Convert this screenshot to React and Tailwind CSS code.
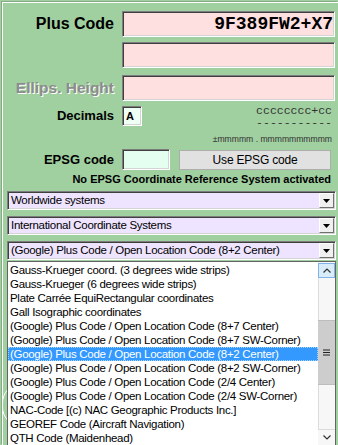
import React from "react";

const listItems = [
  "Gauss-Krueger coord. (3 degrees wide strips)",
  "Gauss-Krueger (6 degrees wide strips)",
  "Plate Carrée EquiRectangular coordinates",
  "Gall Isographic coordinates",
  "(Google) Plus Code / Open Location Code (8+7 Center)",
  "(Google) Plus Code / Open Location Code (8+7 SW-Corner)",
  "(Google) Plus Code / Open Location Code (8+2 Center)",
  "(Google) Plus Code / Open Location Code (8+2 SW-Corner)",
  "(Google) Plus Code / Open Location Code (2/4 Center)",
  "(Google) Plus Code / Open Location Code (2/4 SW-Corner)",
  "NAC-Code [(c) NAC Geographic Products Inc.]",
  "GEOREF Code (Aircraft Navigation)",
  "QTH Code (Maidenhead)",
];
const SELECTED = 6;

// classic sunken 3D edit box
const sunken =
  "border border-t-[#7d7d7d] border-l-[#7d7d7d] border-b-white border-r-white shadow-[inset_1px_1px_0_#3f3f3f,inset_-1px_-1px_0_#d4d4d4]";

const ComboBox = ({ text }) => (
  <div className={`flex items-center h-[19px] bg-[#eee4ff] ${sunken}`}>
    <div className="flex-1 pl-[3px] text-[11.5px] tracking-[-0.3px] leading-[15px] whitespace-nowrap overflow-hidden">
      {text}
    </div>
    <div className="w-[15px] h-[15px] mr-[1px] flex items-center justify-center bg-[#f0f0f0] border border-t-white border-l-white border-b-[#707070] border-r-[#707070]">
      <svg width="7" height="4" viewBox="0 0 7 4">
        <path d="M0 0h7L3.5 4z" fill="#000" />
      </svg>
    </div>
  </div>
);

export default function App() {
  return (
    <div className="relative w-[338px] h-[445px] overflow-hidden bg-[#a0cfa0] pt-[2px] pl-[2px] font-['Liberation_Sans',Arial,sans-serif] text-black">
      {/* edge of a round control peeking out behind the open list */}
      <div className="absolute left-[2px] top-[383px] w-[40px] h-[44px] rounded-full border border-white" />

      <div className="relative h-full border-t border-l border-white shadow-[-1px_-1px_0_#86a886] pl-[4px] pr-[2px]">
        {/* Plus Code */}
        <div className="flex items-center mt-[8px]">
          <div className="w-[107px] text-right text-[16px] font-bold leading-[20px]">Plus Code</div>
          <div className={`ml-[8px] w-[213px] h-[26px] bg-[#ffe0e0] flex items-center justify-end pr-[1px] ${sunken}`}>
            <span className="font-['Liberation_Mono',monospace] font-bold text-[18px] leading-[22px]">9F389FW2+X7</span>
          </div>
        </div>

        <div className="flex items-center mt-[5px]">
          <div className="w-[107px]" />
          <div className={`ml-[8px] w-[213px] h-[26px] bg-[#ffe0e0] ${sunken}`} />
        </div>

        <div className="flex items-center mt-[7px]">
          <div className="w-[107px] text-right text-[15.5px] font-bold leading-[20px] text-[#8c8c8c] [text-shadow:1px_1px_0_#ffffff]">
            Ellips. Height
          </div>
          <div className={`ml-[8px] w-[213px] h-[26px] bg-[#ffe0e0] ${sunken}`} />
        </div>

        {/* Decimals + format hints */}
        <div className="flex items-start h-[44px] mt-[3px]">
          <div className="flex items-center mt-[2px]">
            <div className="w-[107px] text-right text-[13px] font-bold leading-[16px]">Decimals</div>
            <div className={`ml-[8px] w-[20px] h-[20px] bg-[#f0fff4] flex items-center pl-[3px] ${sunken}`}>
              <span className="text-[11px] font-bold leading-[12px]">A</span>
            </div>
          </div>
          <div className="flex-1 flex flex-col items-end pr-[4px] text-[#333]">
            <div className="mt-[1px] font-['Liberation_Mono',monospace] text-[11.5px] leading-[12px]">cccccccc+cc</div>
            <div className="font-['Liberation_Mono',monospace] text-[11.5px] leading-[12px]">-----------</div>
            <div className="mt-[5px] text-[8.6px] leading-[10px]">±mmmmm . mmmmmmmmmm</div>
          </div>
        </div>

        {/* EPSG */}
        <div className="flex items-center mt-[1px]">
          <div className="w-[107px] text-right text-[13px] font-bold leading-[16px]">EPSG code</div>
          <div className={`ml-[8px] w-[48px] h-[21px] bg-[#e4fff0] ${sunken}`} />
          <button className="ml-[9px] w-[152px] h-[20px] bg-[#e1e1e1] border border-[#adadad] text-[12px] tracking-[-0.2px] leading-[16px]">
            Use EPSG code
          </button>
        </div>

        <div className="mt-[3px] pr-[5px] text-right text-[11px] font-bold leading-[12px]">
          No EPSG Coordinate Reference System activated
        </div>

        <div className="mt-[6px] flex flex-col gap-[6px]">
          <ComboBox text="Worldwide systems" />
          <ComboBox text="International Coordinate Systems" />
          <ComboBox text="(Google) Plus Code / Open Location Code (8+2 Center)" />
        </div>

        {/* opened drop-down list */}
        <div className="relative z-10 mt-[1px] flex h-[200px] bg-white border border-[#646464]">
          <div className="flex-1 pt-[1px] min-w-0">
            {listItems.map((item, i) => (
              <div
                key={item}
                className={`h-[14px] pl-[2px] text-[11.5px] tracking-[-0.3px] leading-[14px] whitespace-nowrap overflow-hidden ${
                  i === SELECTED ? "bg-[#3399ff] text-white outline-1 outline-dotted outline-[#a8d4ff] -outline-offset-1" : ""
                }`}
              >
                {item}
              </div>
            ))}
          </div>
          <div className="w-[17px] flex flex-col bg-[#f7f7f7] pt-[1px]">
            <div className="h-[15px] flex items-center justify-center bg-[#d9ecfa] border border-[#7eb4ea]">
              <svg width="8" height="5" viewBox="0 0 8 5">
                <path d="M0.5 4.5L4 1l3.5 3.5" fill="none" stroke="#333" strokeWidth="1.2" />
              </svg>
            </div>
            <div className="h-[42px] border-l border-[#dcdcdc]" />
            <div className="h-[65px] flex items-center justify-center bg-[#cdcdcd] border-y border-[#bdbdbd]">
              <svg width="7" height="7" viewBox="0 0 7 7">
                <path d="M0 1h7M0 3.5h7M0 6h7" stroke="#222" strokeWidth="1.2" />
              </svg>
            </div>
            <div className="h-[44px] border-l border-[#dcdcdc]" />
            <div className="h-[16px] flex items-center justify-center border-t border-[#dcdcdc]">
              <svg width="8" height="5" viewBox="0 0 8 5">
                <path d="M0.5 0.5L4 4l3.5-3.5" fill="none" stroke="#333" strokeWidth="1.2" />
              </svg>
            </div>
          </div>
        </div>
      </div>
    </div>
  );
}
